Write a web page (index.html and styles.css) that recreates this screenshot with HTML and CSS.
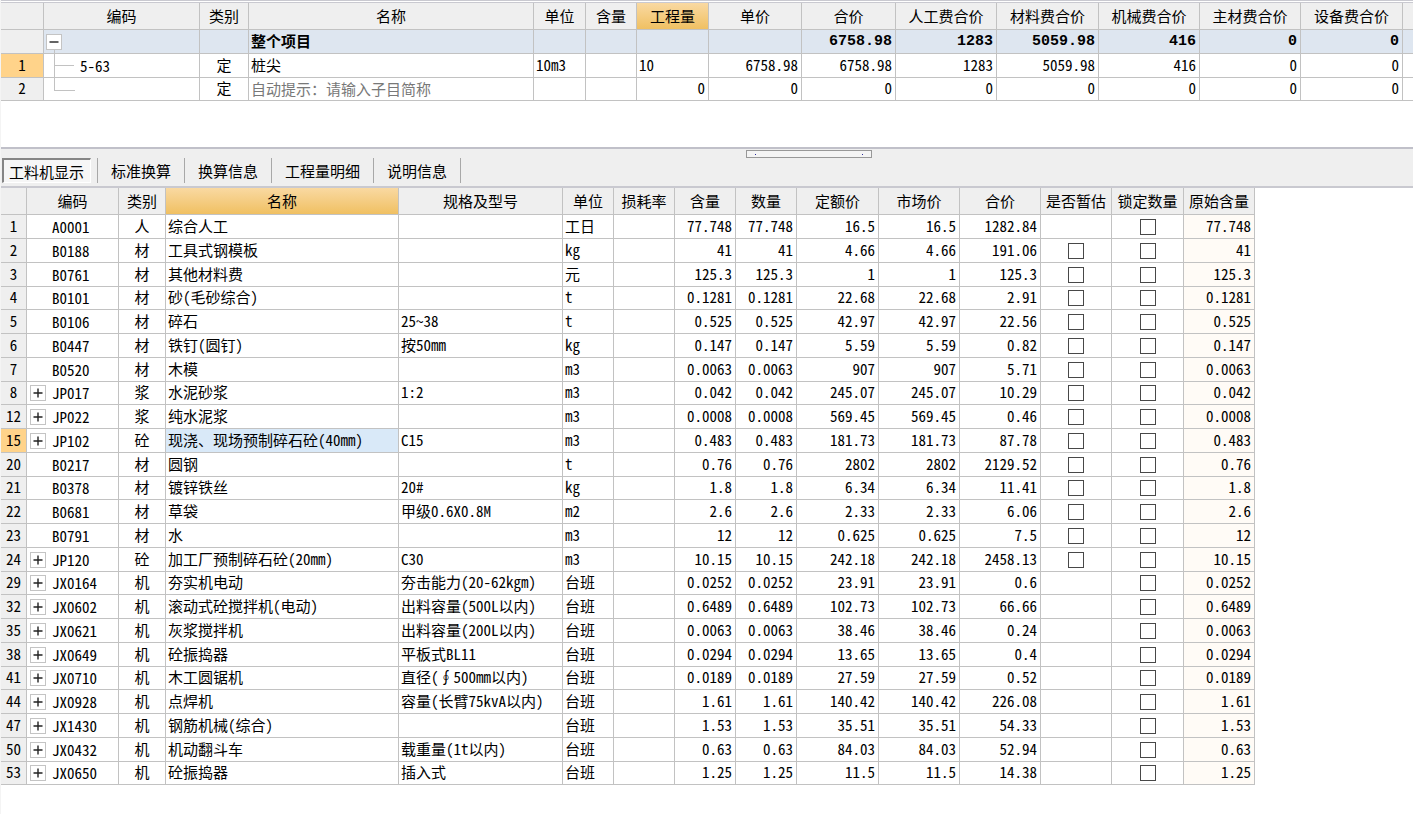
FILE: index.html
```html
<!DOCTYPE html>
<html lang="zh-CN">
<head>
<meta charset="utf-8">
<title>工料机显示</title>
<link rel="stylesheet" href="styles.css">
</head>
<body>
<main class="workspace">
  <section class="pane pane-project">
    <table class="grid">
      <colgroup>
        <col class="w43"><col class="w156"><col class="w49"><col class="w285"><col class="w52"><col class="w51"><col class="w72"><col class="w93"><col class="w94"><col class="w101"><col class="w102"><col class="w101"><col class="w101"><col class="w102"><col>
      </colgroup>
      <thead>
        <tr><th></th><th>编码</th><th>类别</th><th>名称</th><th>单位</th><th>含量</th><th class="active">工程量</th><th>单价</th><th>合价</th><th>人工费合价</th><th>材料费合价</th><th>机械费合价</th><th>主材费合价</th><th>设备费合价</th><th class="last"></th></tr>
      </thead>
      <tbody>
        <tr class="total"><th></th><td class="tree tree-root"><button class="toggle" type="button" aria-label="折叠"><svg viewBox="0 0 14 14"><path d="M2.500 7h9"/></svg></button></td><td></td><td>整个项目</td><td></td><td></td><td></td><td></td><td class="num">6758.98</td><td class="num">1283</td><td class="num">5059.98</td><td class="num">416</td><td class="num">0</td><td class="num">0</td><td class="last"></td></tr>
        <tr><th class="current">1</th><td class="tree tree-mid">5-63</td><td class="mid">定</td><td>桩尖</td><td>10m3</td><td></td><td>10</td><td class="num">6758.98</td><td class="num">6758.98</td><td class="num">1283</td><td class="num">5059.98</td><td class="num">416</td><td class="num">0</td><td class="num">0</td><td class="last"></td></tr>
        <tr class="short"><th>2</th><td class="tree tree-end"></td><td class="mid">定</td><td><input class="hint" type="text" aria-label="子目简称" placeholder="自动提示：请输入子目简称"></td><td></td><td></td><td class="num">0</td><td class="num">0</td><td class="num">0</td><td class="num">0</td><td class="num">0</td><td class="num">0</td><td class="num">0</td><td class="num">0</td><td class="last"></td></tr>
      </tbody>
    </table>
  </section>

  <div class="divider">
    <button class="splitter" type="button" aria-label="调整窗格"></button>
    <nav class="tabs" role="tablist">
      <button class="tab selected" type="button" role="tab" aria-selected="true">工料机显示</button>
      <button class="tab" type="button" role="tab">标准换算</button>
      <button class="tab" type="button" role="tab">换算信息</button>
      <button class="tab" type="button" role="tab">工程量明细</button>
      <button class="tab" type="button" role="tab">说明信息</button>
    </nav>
  </div>

  <section class="pane pane-resources">
    <table class="grid resources">
      <colgroup>
        <col class="w26"><col class="w92"><col class="w47"><col class="w233"><col class="w164"><col class="w51"><col class="w61"><col class="w61"><col class="w61"><col class="w82"><col class="w81"><col class="w81"><col class="w71"><col class="w72"><col class="w71"><col>
      </colgroup>
      <thead>
        <tr><th></th><th>编码</th><th>类别</th><th class="active">名称</th><th>规格及型号</th><th>单位</th><th>损耗率</th><th>含量</th><th>数量</th><th>定额价</th><th>市场价</th><th>合价</th><th>是否暂估</th><th>锁定数量</th><th>原始含量</th><td class="filler"></td></tr>
      </thead>
      <tbody id="resource-rows"></tbody>
    </table>
  </section>
</main>
<script src="grid.js"></script>
</body>
</html>
```
FILE: styles.css
```css
* { box-sizing: border-box; }

body {
  margin: 0;
  background: #fff;
  color: #000;
  font-family: "Noto Sans Mono CJK SC", "Noto Sans CJK SC", "Liberation Mono", monospace;
  font-size: 15px;
  line-height: 18px;
}

button, input { font: inherit; color: inherit; }

.workspace {
  display: flex;
  flex-direction: column;
  min-height: 100vh;
  border-left: 1px solid #f4f4f4;
}

.pane-project {
  min-height: 147px;
  border-top: 3px double #c9c9d0;
}

.grid {
  width: 100%;
  table-layout: fixed;
  border-collapse: separate;
  border-spacing: 0;
}

.grid th, .grid td {
  height: 24px;
  padding: 0 2px 2px;
  border-right: 1px solid #c2c2c2;
  border-bottom: 1px solid #c2c2c2;
  white-space: nowrap;
  overflow: hidden;
  text-align: left;
}

.grid th {
  padding: 0 0 2px;
  background: #efefef;
  font-weight: 400;
  text-align: center;
}

.grid thead th, .grid thead td { height: 27px; padding: 0; }
.grid .active { background: linear-gradient(#f9d9a2, #f0c062); }
.grid .current { background: #ffd38a; }
.grid .num { padding-right: 3px; text-align: right; }
.grid .mid { text-align: center; }
.grid .last { border-right: 0; }
.grid .filler { border: 0; }
.grid .box { padding: 0; }
.grid .short th, .grid .short td,
.resources tbody tr:nth-child(4n) th, .resources tbody tr:nth-child(4n) td { height: 23px; }

.total td { background: #dee6f0; font-weight: 700; }
.grid .total .num { padding-bottom: 0; font-family: "Liberation Mono", monospace; }

.w26 { width: 26px; }
.w43 { width: 43px; }
.w47 { width: 47px; }
.w49 { width: 49px; }
.w51 { width: 51px; }
.w52 { width: 52px; }
.w61 { width: 61px; }
.w71 { width: 71px; }
.w72 { width: 72px; }
.w81 { width: 81px; }
.w82 { width: 82px; }
.w92 { width: 92px; }
.w93 { width: 93px; }
.w94 { width: 94px; }
.w101 { width: 101px; }
.w102 { width: 102px; }
.w156 { width: 156px; }
.w164 { width: 164px; }
.w233 { width: 233px; }
.w285 { width: 285px; }

.toggle {
  display: block;
  width: 16px;
  height: 16px;
  padding: 0;
  border: 1px solid #c4c4c4;
  background: #fff;
}

.toggle svg {
  display: block;
  width: 14px;
  height: 14px;
  fill: none;
  stroke: #222;
  stroke-width: 1.4;
}

.grid .tree { position: relative; padding: 0 2px 0 36px; }
.grid .tree-root { padding-left: 2px; }

.tree-root::after, .tree-mid::before, .tree-end::before, .tree-mid::after {
  content: "";
  position: absolute;
  left: 10px;
  border-left: 1px solid #c2c2c2;
}

.tree-root::after { top: 20px; bottom: 0; }
.tree-mid::before { top: 0; bottom: 0; }
.tree-end::before { top: 0; width: 20px; height: 12px; border-bottom: 1px solid #c2c2c2; }
.tree-mid::after { top: 11px; width: 20px; border-left: 0; border-top: 1px solid #c2c2c2; }

.hint {
  display: block;
  width: 100%;
  height: 20px;
  padding: 0;
  border: 0;
  outline: 0;
  background: transparent;
}

.hint::placeholder { color: #787878; opacity: 1; }

.divider {
  padding-top: 1px;
  border-top: 2px solid #c0c0c9;
  border-bottom: 2px solid #c9c9d0;
  background: #efefef;
}

.splitter {
  display: flex;
  justify-content: space-between;
  align-items: center;
  width: 126px;
  height: 8px;
  margin-left: 745px;
  padding: 0 8px;
  border: 1px solid #989898;
  background: #f4f4f4;
}

.splitter::before, .splitter::after {
  content: "";
  width: 1px;
  height: 1px;
  background: #2a2a9c;
}

.tabs { display: flex; align-items: flex-start; padding: 0 0 3px 1px; }

.tab {
  height: 25px;
  padding: 0 13px;
  border: 0;
  border-right: 1px solid #a8a8a8;
  background: transparent;
}

.tab.selected {
  margin-right: 6px;
  padding: 2px 6px 0 5px;
  border: 1px solid #fff;
  border-top: 2px solid #858585;
  border-left: 2px solid #858585;
  background: #f6f6f6;
}

.tab.selected + .tab { border-left: 1px solid #a8a8a8; }

.grid .code-cell { padding-bottom: 0; }
.code { display: flex; align-items: center; gap: 6px; padding-left: 1px; }
.code.leaf { padding-left: 23px; }

.check {
  display: block;
  appearance: none;
  width: 16px;
  height: 16px;
  margin: 0 auto;
  border: 1px solid #484848;
  background: #fff;
}

.grid .picked { background: #d9e9f8; }
.grid .origin { background: #fffbf6; }
```
FILE: grid.js
```js
// no | expandable | code | kind | name | spec | unit | content | quantity | base price | market price | total | provisional tick box
const resources = `
1||A0001|人|综合人工||工日|77.748|77.748|16.5|16.5|1282.84|
2||B0188|材|工具式钢模板||kg|41|41|4.66|4.66|191.06|y
3||B0761|材|其他材料费||元|125.3|125.3|1|1|125.3|y
4||B0101|材|砂(毛砂综合)||t|0.1281|0.1281|22.68|22.68|2.91|y
5||B0106|材|碎石|25~38|t|0.525|0.525|42.97|42.97|22.56|y
6||B0447|材|铁钉(圆钉)|按50mm|kg|0.147|0.147|5.59|5.59|0.82|y
7||B0520|材|木模||m3|0.0063|0.0063|907|907|5.71|y
8|+|JP017|浆|水泥砂浆|1:2|m3|0.042|0.042|245.07|245.07|10.29|y
12|+|JP022|浆|纯水泥浆||m3|0.0008|0.0008|569.45|569.45|0.46|y
15|+|JP102|砼|现浇、现场预制碎石砼(40mm)|C15|m3|0.483|0.483|181.73|181.73|87.78|y
20||B0217|材|圆钢||t|0.76|0.76|2802|2802|2129.52|y
21||B0378|材|镀锌铁丝|20#|kg|1.8|1.8|6.34|6.34|11.41|y
22||B0681|材|草袋|甲级0.6X0.8M|m2|2.6|2.6|2.33|2.33|6.06|y
23||B0791|材|水||m3|12|12|0.625|0.625|7.5|y
24|+|JP120|砼|加工厂预制碎石砼(20mm)|C30|m3|10.15|10.15|242.18|242.18|2458.13|y
29|+|JX0164|机|夯实机电动|夯击能力(20-62kgm)|台班|0.0252|0.0252|23.91|23.91|0.6|
32|+|JX0602|机|滚动式砼搅拌机(电动)|出料容量(500L以内)|台班|0.6489|0.6489|102.73|102.73|66.66|
35|+|JX0621|机|灰浆搅拌机|出料容量(200L以内)|台班|0.0063|0.0063|38.46|38.46|0.24|
38|+|JX0649|机|砼振捣器|平板式BL11|台班|0.0294|0.0294|13.65|13.65|0.4|
41|+|JX0710|机|木工圆锯机|直径(∮500mm以内)|台班|0.0189|0.0189|27.59|27.59|0.52|
44|+|JX0928|机|点焊机|容量(长臂75kvA以内)|台班|1.61|1.61|140.42|140.42|226.08|
47|+|JX1430|机|钢筋机械(综合)||台班|1.53|1.53|35.51|35.51|54.33|
50|+|JX0432|机|机动翻斗车|载重量(1t以内)|台班|0.63|0.63|84.03|84.03|52.94|
53|+|JX0650|机|砼振捣器|插入式|台班|1.25|1.25|11.5|11.5|14.38|`;

const selectedRow = "15";
const toggle = '<button class="toggle" type="button" aria-label="展开"><svg viewBox="0 0 14 14"><path d="M2.500 7h9M7 2.500v9"/></svg></button>';
const check = (label) => `<input class="check" type="checkbox" aria-label="${label}">`;
const num = (value) => `<td class="num">${value}</td>`;

document.getElementById("resource-rows").innerHTML = resources.trim().split("\n").map((line) => {
  const [no, open, code, kind, name, spec, unit, content, quantity, base, market, total, provisional] = line.split("|");
  const selected = no === selectedRow;
  return `<tr>
    <th${selected ? ' class="current"' : ""}>${no}</th>
    <td class="code-cell"><div class="code${open ? "" : " leaf"}">${open ? toggle : ""}<span>${code}</span></div></td>
    <td class="mid">${kind}</td>
    <td${selected ? ' class="picked"' : ""}>${name}</td>
    <td>${spec}</td><td>${unit}</td><td></td>
    ${[content, quantity, base, market, total].map(num).join("")}
    <td class="box">${provisional ? check(code + " 是否暂估") : ""}</td>
    <td class="box">${check(code + " 锁定数量")}</td>
    <td class="num origin">${content}</td><td class="filler"></td>
  </tr>`;
}).join("");
```
